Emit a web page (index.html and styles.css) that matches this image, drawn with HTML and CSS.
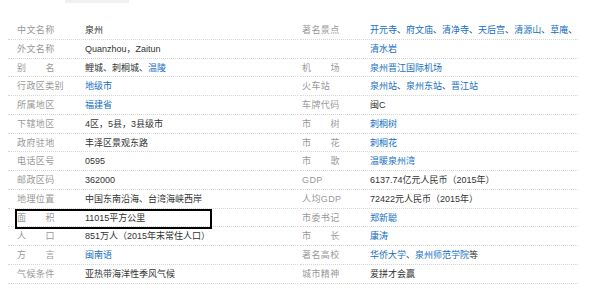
FILE: index.html
```html
<!DOCTYPE html>
<html>
<head>
<meta charset="utf-8">
<link rel="stylesheet" href="styles.css">
</head>
<body>
<div class="topbar"></div>
<div class="info">
  <dl class="col col-left">
    <div class="row"><dt>中文名称</dt><dd>泉州</dd></div>
    <div class="row"><dt>外文名称</dt><dd>Quanzhou，Zaitun</dd></div>
    <div class="row"><dt><span class="two">别名</span></dt><dd>鲤城、刺桐城、<a>温陵</a></dd></div>
    <div class="row"><dt>行政区类别</dt><dd><a>地级市</a></dd></div>
    <div class="row"><dt>所属地区</dt><dd><a>福建省</a></dd></div>
    <div class="row"><dt>下辖地区</dt><dd>4区，5县，3县级市</dd></div>
    <div class="row"><dt>政府驻地</dt><dd>丰泽区景观东路</dd></div>
    <div class="row"><dt>电话区号</dt><dd>0595</dd></div>
    <div class="row"><dt>邮政区码</dt><dd>362000</dd></div>
    <div class="row"><dt>地理位置</dt><dd>中国东南沿海、台湾海峡西岸</dd></div>
    <div class="row row-marked"><dt><span class="two">面积</span></dt><dd>11015平方公里</dd><div class="mark"></div></div>
    <div class="row"><dt><span class="two">人口</span></dt><dd>851万人（2015年末常住人口）</dd></div>
    <div class="row"><dt><span class="two">方言</span></dt><dd><a>闽南语</a></dd></div>
    <div class="row"><dt>气候条件</dt><dd>亚热带海洋性季风气候</dd></div>
  </dl>
  <dl class="col col-right">
    <div class="row"><dt>著名景点</dt><dd><a>开元寺</a>、<a>府文庙</a>、<a>清净寺</a>、<a>天后宫</a>、<a>清源山</a>、<a>草庵</a>、</dd></div>
    <div class="row"><dt></dt><dd><a>清水岩</a></dd></div>
    <div class="row"><dt><span class="two">机场</span></dt><dd><a>泉州晋江国际机场</a></dd></div>
    <div class="row"><dt>火车站</dt><dd><a>泉州站</a>、<a>泉州东站</a>、<a>晋江站</a></dd></div>
    <div class="row"><dt>车牌代码</dt><dd>闽C</dd></div>
    <div class="row"><dt><span class="two">市树</span></dt><dd><a>刺桐树</a></dd></div>
    <div class="row"><dt><span class="two">市花</span></dt><dd><a>刺桐花</a></dd></div>
    <div class="row"><dt><span class="two">市歌</span></dt><dd><a>温暖泉州湾</a></dd></div>
    <div class="row"><dt>GDP</dt><dd>6137.74亿元人民币（2015年）</dd></div>
    <div class="row"><dt>人均GDP</dt><dd>72422元人民币（2015年）</dd></div>
    <div class="row"><dt>市委书记</dt><dd><a>郑新聪</a></dd></div>
    <div class="row"><dt><span class="two">市长</span></dt><dd><a>康涛</a></dd></div>
    <div class="row"><dt>著名高校</dt><dd><a>华侨大学</a>、<a>泉州师范学院</a>等</dd></div>
    <div class="row"><dt>城市精神</dt><dd>爱拼才会赢</dd></div>
  </dl>
</div>
</body>
</html>
```
FILE: styles.css
```css
html, body {
  margin: 0;
  padding: 0;
  background: #fff;
}
body {
  font-family: "Liberation Sans", Arial, "Noto Sans CJK SC", sans-serif;
  font-size: 9px;
  color: #333;
}
.topbar {
  margin-left: 65px;
  width: 64px;
  height: 3px;
  background: #f0f0f0;
}
.info {
  display: flex;
  margin-top: 18px;
  padding-left: 8px;
}
.col {
  margin: 0;
}
.col-left {
  width: 290px;
  margin-right: 2px;
}
.col-right {
  width: 278px;
}
.row {
  display: flex;
  height: 17.75px;
  line-height: 19px;
  border-bottom: 1px dotted #d6d6d6;
  white-space: nowrap;
}
.row-marked {
  position: relative;
}
.mark {
  position: absolute;
  left: 7px;
  top: 0;
  width: 193px;
  height: 16px;
  border: 2px solid #000;
}
dt {
  color: #999;
  letter-spacing: 0.4px;
}
.col-left dt {
  width: 68px;
  padding-left: 9px;
}
.col-right dt {
  width: 68px;
  padding-left: 2px;
}
dd {
  margin: 0;
}
.two {
  display: inline-block;
  width: 38px;
  text-align: justify;
  text-align-last: justify;
}
a {
  color: #136ec2;
  text-decoration: none;
}
```
